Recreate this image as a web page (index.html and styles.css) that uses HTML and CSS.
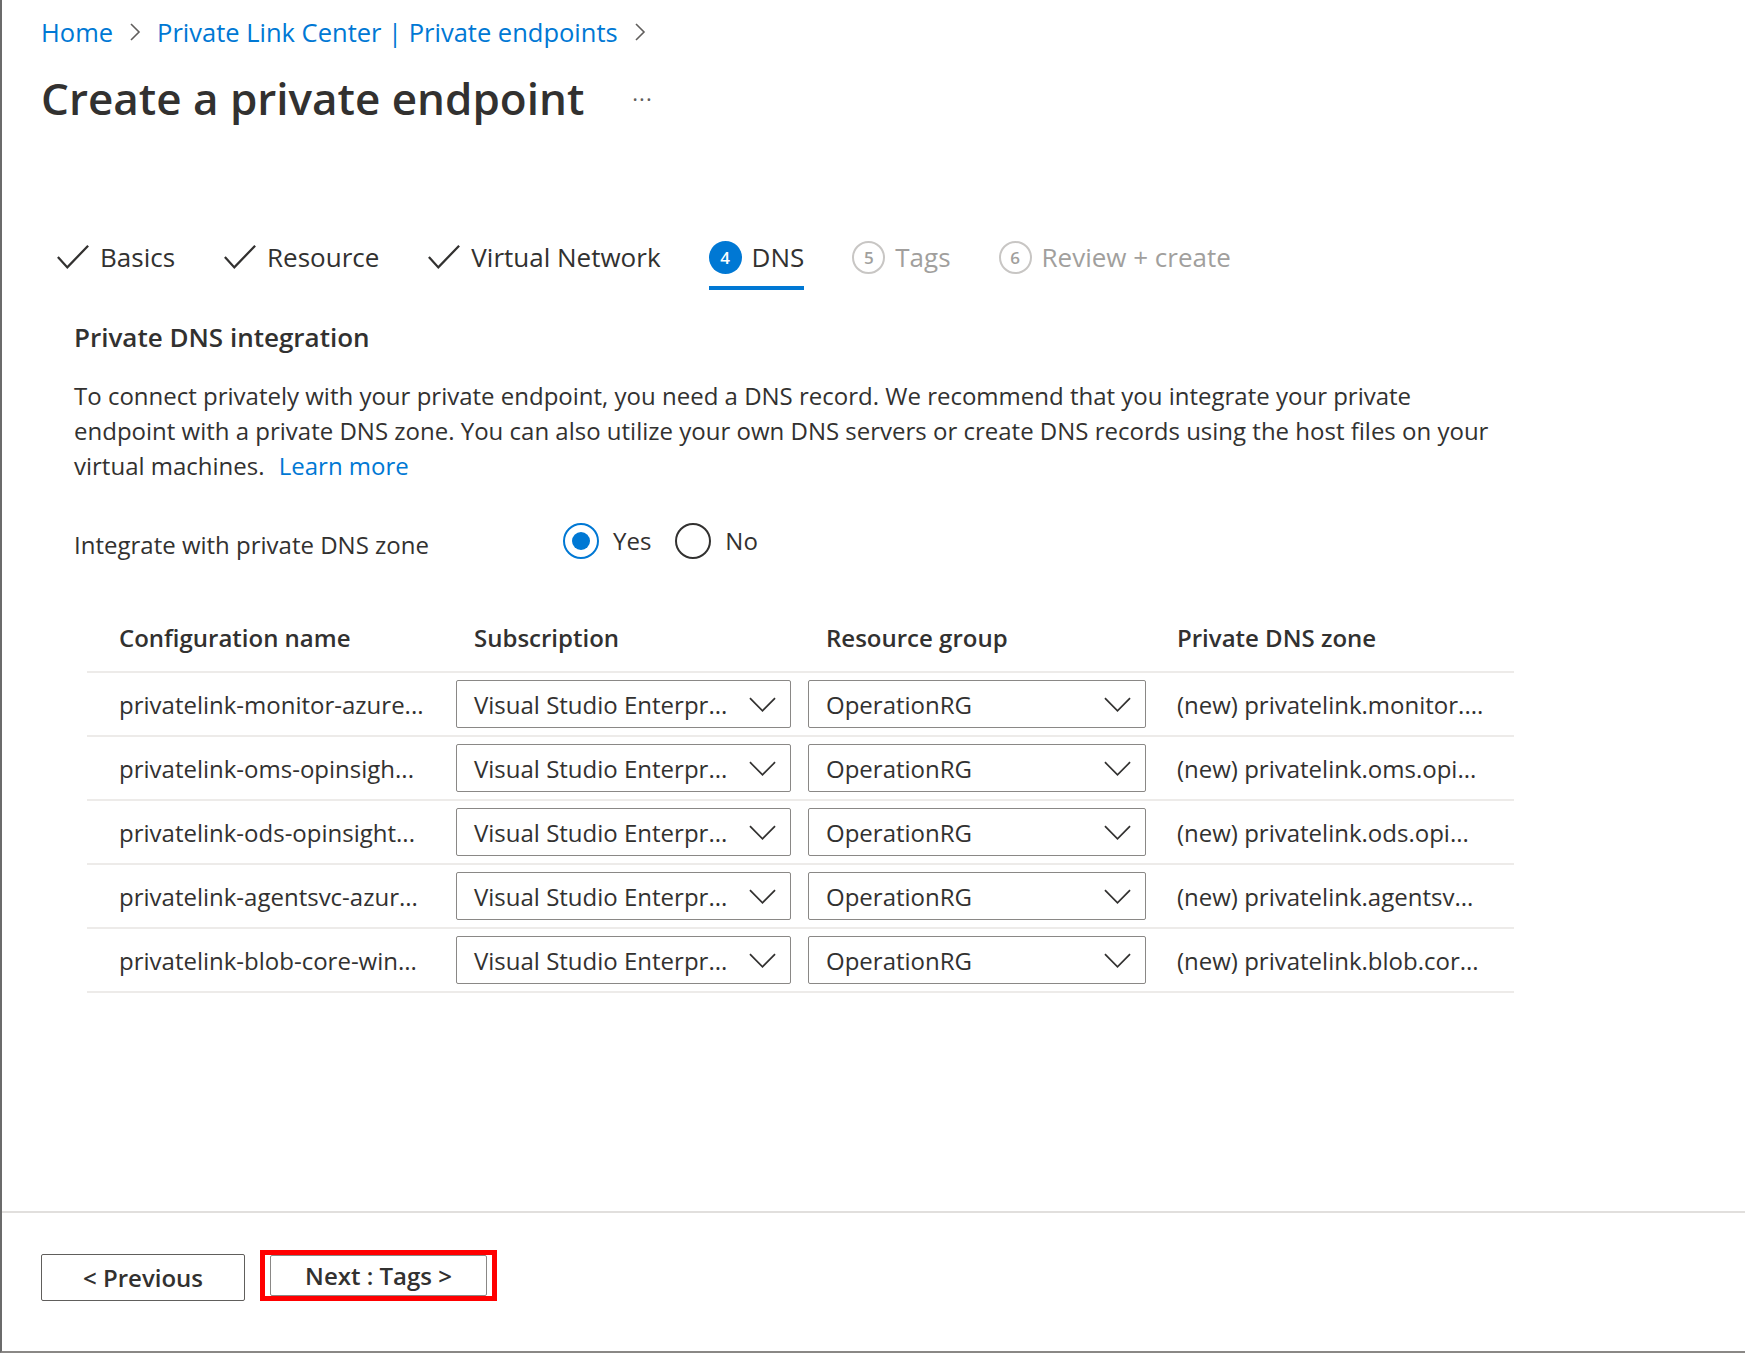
FILE: index.html
```html
<!DOCTYPE html>
<html lang="en">
<head>
  <meta charset="UTF-8" />
  <title>Create a private endpoint</title>
  <link rel="stylesheet" href="styles.css">
</head>
<body>
  <div class="page">
    <div class="main">
      <nav class="crumbs">
        <a href="#">Home</a>
        <svg class="crumb-sep" viewBox="0 0 12 20"><path d="M2 2 L10 10 L2 18" /></svg>
        <a href="#">Private Link Center | Private endpoints</a>
        <svg class="crumb-sep" viewBox="0 0 12 20"><path d="M2 2 L10 10 L2 18" /></svg>
      </nav>

      <div class="title-row">
        <h1>Create a private endpoint</h1>
        <span class="more">···</span>
      </div>

      <div class="tabs">
        <div class="tab done">
          <svg class="check" viewBox="0 0 36 28"><path d="M2 14 L12 25 L34 2" /></svg>
          <span>Basics</span>
        </div>
        <div class="tab done">
          <svg class="check" viewBox="0 0 36 28"><path d="M2 14 L12 25 L34 2" /></svg>
          <span>Resource</span>
        </div>
        <div class="tab done">
          <svg class="check" viewBox="0 0 36 28"><path d="M2 14 L12 25 L34 2" /></svg>
          <span>Virtual Network</span>
        </div>
        <div class="tab active">
          <span class="step">4</span>
          <span>DNS</span>
        </div>
        <div class="tab todo">
          <span class="step">5</span>
          <span>Tags</span>
        </div>
        <div class="tab todo">
          <span class="step">6</span>
          <span>Review + create</span>
        </div>
      </div>

      <div class="content">
        <h2>Private DNS integration</h2>
        <p class="intro">
          To connect privately with your private endpoint, you need a DNS record. We recommend that you integrate your private<br>
          endpoint with a private DNS zone. You can also utilize your own DNS servers or create DNS records using the host files on your<br>
          virtual machines. <a href="#">Learn more</a>
        </p>

        <div class="field-row">
          <span class="field-label">Integrate with private DNS zone</span>
          <div class="radios">
            <label class="radio checked"><span class="dot"></span>Yes</label>
            <label class="radio"><span class="dot"></span>No</label>
          </div>
        </div>

        <table class="dns-table">
          <colgroup>
            <col class="c-name">
            <col class="c-sub">
            <col class="c-rg">
            <col>
          </colgroup>
          <thead>
            <tr>
              <th>Configuration name</th>
              <th class="pad-select">Subscription</th>
              <th class="pad-select">Resource group</th>
              <th>Private DNS zone</th>
            </tr>
          </thead>
          <tbody id="rows"></tbody>
        </table>
      </div>
    </div>

    <footer class="actions">
      <button class="btn">&lt; Previous</button>
      <span class="highlight"><button class="btn">Next : Tags &gt;</button></span>
    </footer>
  </div>

  <script>
    const rows = [
      ["privatelink-monitor-azure...", "(new) privatelink.monitor...."],
      ["privatelink-oms-opinsigh...", "(new) privatelink.oms.opi..."],
      ["privatelink-ods-opinsight...", "(new) privatelink.ods.opi..."],
      ["privatelink-agentsvc-azur...", "(new) privatelink.agentsv..."],
      ["privatelink-blob-core-win...", "(new) privatelink.blob.cor..."]
    ];

    const chevron = '<svg class="chev" viewBox="0 0 28 15"><path d="M1 1 L14 14 L27 1" /></svg>';
    const body = document.getElementById("rows");

    rows.forEach(r => {
      const tr = document.createElement("tr");
      tr.innerHTML = `
        <td>${r[0]}</td>
        <td><div class="select sub"><span>Visual Studio Enterpr...</span>${chevron}</div></td>
        <td><div class="select rg"><span>OperationRG</span>${chevron}</div></td>
        <td>${r[1]}</td>
      `;
      body.appendChild(tr);
    });
  </script>
</body>
</html>
```

FILE: styles.css
```css
:root {
  --blue: #0078d4;
  --text: #323130;
  --muted: #a19f9d;
  --line: #edebe9;
}

html, body {
  margin: 0;
  height: 100%;
}

body {
  font-family: 'Open Sans', 'Noto Sans', sans-serif;
  color: var(--text);
  background: #fff;
}

.page {
  height: 100vh;
  box-sizing: border-box;
  border-left: 2px solid #6b6b6b;
  border-bottom: 2px solid #8a8886;
  display: flex;
  flex-direction: column;
}

.main {
  flex: 1;
  padding: 0 0 0 39px;
}

/* breadcrumb */
.crumbs {
  display: flex;
  align-items: center;
  gap: 16px;
  height: 64px;
  font-size: 25.5px;
}

.crumbs a {
  color: var(--blue);
  text-decoration: none;
}

.crumb-sep {
  width: 12px;
  height: 20px;
  fill: none;
  stroke: #605e5c;
  stroke-width: 1.6;
}

.title-row {
  display: flex;
  align-items: center;
  height: 68px;
}

h1 {
  margin: 0;
  font-size: 44px;
  font-weight: 600;
}

.more {
  margin-left: 48px;
  font-size: 22px;
  color: #605e5c;
  letter-spacing: 1px;
}

/* wizard tabs */
.tabs {
  display: flex;
  align-items: center;
  margin-top: 92px;
  padding-left: 15px;
  height: 66px;
}

.tab {
  display: flex;
  align-items: center;
  gap: 10px;
  font-size: 26px;
  height: 66px;
  box-sizing: border-box;
  margin-right: 48px;
  position: relative;
}

.check {
  width: 34px;
  height: 28px;
  fill: none;
  stroke: var(--text);
  stroke-width: 2.4;
}

.step {
  width: 33px;
  height: 33px;
  border-radius: 50%;
  box-sizing: border-box;
  display: flex;
  align-items: center;
  justify-content: center;
  font-size: 17px;
  font-weight: 600;
}

.tab.active .step {
  background: var(--blue);
  color: #fff;
}

.tab.active::after {
  content: "";
  position: absolute;
  left: 0;
  right: 0;
  bottom: 0;
  height: 4px;
  background: var(--blue);
}

.tab.todo {
  color: var(--muted);
}

.tab.todo .step {
  border: 2px solid #c8c6c4;
  color: var(--muted);
}

/* content */
.content {
  padding-left: 33px;
}

h2 {
  margin: 30px 0 0;
  font-size: 26px;
  font-weight: 600;
  line-height: 34px;
}

.intro {
  margin: 24px 0 0;
  font-size: 24px;
  line-height: 35px;
}

.intro a {
  color: var(--blue);
  text-decoration: none;
  margin-left: 8px;
}

.field-row {
  display: flex;
  align-items: center;
  margin-top: 37px;
}

.field-label {
  font-size: 24px;
  width: 489px;
  padding-top: 8px;
}

.radios {
  display: flex;
  gap: 24px;
}

.radio {
  display: flex;
  align-items: center;
  gap: 14px;
  font-size: 24px;
}

.radio .dot {
  width: 36px;
  height: 36px;
  border-radius: 50%;
  border: 2px solid var(--text);
  box-sizing: border-box;
  display: flex;
  align-items: center;
  justify-content: center;
}

.radio.checked .dot {
  border-color: var(--blue);
}

.radio.checked .dot::after {
  content: "";
  width: 18px;
  height: 18px;
  border-radius: 50%;
  background: var(--blue);
}

/* table */
.dns-table {
  margin: 43px 0 0 13px;
  border-collapse: collapse;
  table-layout: fixed;
  width: 1427px;
  font-size: 24px;
}

.c-name { width: 369px; }
.c-sub { width: 352px; }
.c-rg { width: 369px; }

.dns-table th,
.dns-table td {
  box-sizing: border-box;
  text-align: left;
  padding: 0;
  border-bottom: 2px solid var(--line);
  white-space: nowrap;
}

.dns-table th {
  font-weight: 600;
  height: 68px;
}

.dns-table td {
  height: 64px;
}

.dns-table th:first-child,
.dns-table td:first-child {
  padding-left: 32px;
}

.dns-table th.pad-select {
  padding-left: 18px;
}

.select {
  display: flex;
  align-items: center;
  justify-content: space-between;
  height: 48px;
  box-sizing: border-box;
  border: 1.5px solid #8a8886;
  border-radius: 2px;
  padding: 0 14px 0 17px;
}

.select.sub { width: 335px; }
.select.rg { width: 338px; }

.chev {
  width: 27px;
  height: 15px;
  fill: none;
  stroke: var(--text);
  stroke-width: 1.8;
}

/* footer */
.actions {
  height: 140px;
  box-sizing: border-box;
  border-top: 2px solid #e1dfdd;
  display: flex;
  align-items: flex-end;
  gap: 15px;
  padding: 0 0 50px 39px;
}

.btn {
  font-family: inherit;
  font-size: 24px;
  font-weight: 600;
  color: var(--text);
  background: #fff;
  border: 1.5px solid #605e5c;
  border-radius: 2px;
  height: 47px;
  width: 204px;
}

.highlight {
  border: 5px solid #ff0000;
  padding: 0 5px;
  display: flex;
}

.highlight .btn {
  width: 217px;
  height: 41px;
  border-color: #8a8886;
}
```
